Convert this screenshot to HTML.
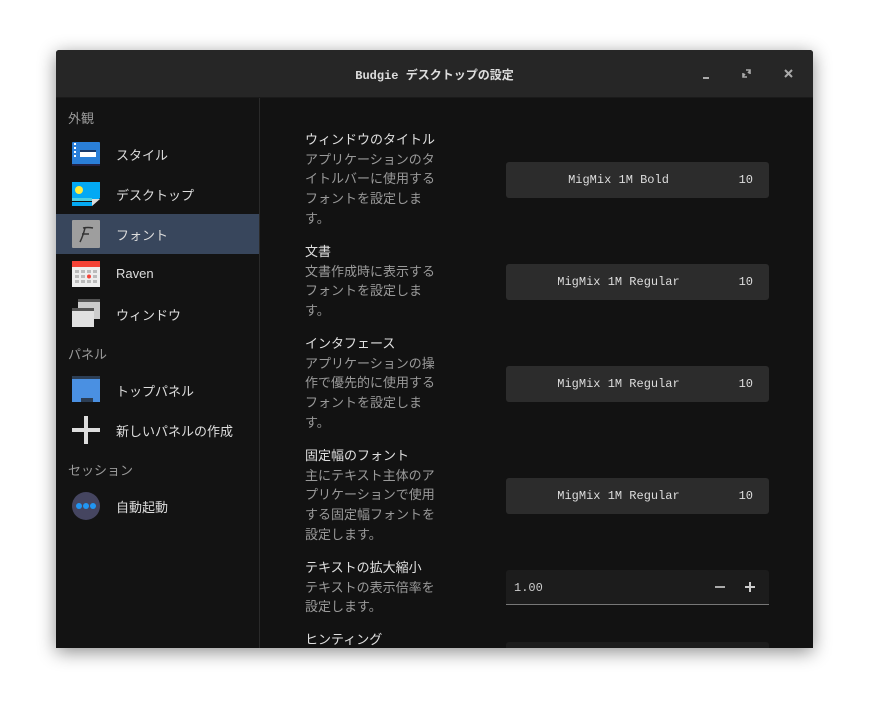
<!DOCTYPE html>
<html><head><meta charset="utf-8"><style>
body{margin:0;width:869px;height:710px;background:#fff;position:relative;overflow:hidden;font-family:"Liberation Sans","Noto Sans CJK JP",sans-serif}
.win{position:absolute;left:56px;top:50px;width:757px;height:598px;background:#121212;box-shadow:0 4px 18px rgba(0,0,0,.45);overflow:hidden;border-radius:3px 3px 0 0}
.tb{position:absolute;left:0;top:0;width:757px;height:47px;background:#262626;border-bottom:1px solid #1a1a1a}
.title{position:absolute;left:0;width:757px;top:16px;text-align:center;color:#ddd;font:bold 12px "Liberation Mono","Noto Sans CJK JP",monospace}
.side{position:absolute;left:0;top:48px;width:203px;height:550px;background:#131313;border-right:1px solid #2a2a2a}
.hd{position:absolute;left:12px;color:#9a9a9a;font-size:13px}
.it{position:absolute;left:0;width:203px;height:40px;color:#ddd;font-size:13px}
.it span{position:absolute;left:60px;top:11px}
.it.sel{background:#38465c}
.ic{position:absolute;left:16px;top:8px;width:28px;height:24px}
.lb{position:absolute;left:249px;color:#e0e0e0;font-size:13px;line-height:19.7px}
.lb i{font-style:normal;color:#9a9a9a}
.btn{position:absolute;left:450px;width:263px;height:36px;background:#2c2c2c;border-radius:3px;color:#ddd;font:12px "Liberation Mono",monospace}
.btn .n{position:absolute;left:0;width:225px;text-align:center;top:11px}
.btn .s{position:absolute;right:16px;top:11px}
</style></head><body>
<div class="win">
<div class="tb"><div class="title">Budgie デスクトップの設定</div>
<div style="position:absolute;left:647px;top:27px;width:6px;height:2px;background:#aaa"></div>
<svg style="position:absolute;left:686px;top:19px" width="10" height="10"><path d="M4 1H8V5M6 4L8 2M5 8H1V4M3 5L1 7" stroke="#aaa" stroke-width="1.6" fill="none"/></svg>
<svg style="position:absolute;left:728px;top:19px" width="10" height="10"><path d="M1 1L8 8M8 1L1 8" stroke="#aaa" stroke-width="2"/></svg>
</div>
<div class="side">
<div class="hd" style="top:10px">外観</div>
<div class="it" style="top:36px"><svg class="ic" viewBox="0 0 28 24"><rect x="0" y="0" width="28" height="24" rx="1" fill="#2a7fd8"/><rect x="0" y="22" width="28" height="2" fill="#224"/><rect x="8" y="8" width="16" height="7" fill="#fff"/><rect x="8" y="8" width="16" height="2" fill="#1a3a6a"/><rect x="2" y="1" width="2" height="2" fill="#fff"/><rect x="2" y="5" width="2" height="2" fill="#fff"/><rect x="2" y="9" width="2" height="2" fill="#fff"/><rect x="2" y="13" width="2" height="2" fill="#fff"/></svg><span>スタイル</span></div>
<div class="it" style="top:76px"><svg class="ic" viewBox="0 0 28 24"><path d="M0 0H28V16L20 24H0Z" fill="#03a9f4"/><rect x="0" y="16" width="20" height="3" fill="#4dd0e1"/><rect x="0" y="19" width="20" height="1" fill="#111"/><circle cx="7" cy="8" r="4" fill="#ffeb3b"/><path d="M20 24V17H28Z" fill="#ddd"/></svg><span>デスクトップ</span></div>
<div class="it sel" style="top:116px"><svg class="ic" viewBox="0 0 28 28" style="top:6px;height:28px"><rect width="28" height="28" rx="1" fill="#9e9e9e"/><path d="M11 8Q16 7 21 8M10 14H17M13 8Q11 16 8 22" stroke="#333" stroke-width="1.5" fill="none"/></svg><span>フォント</span></div>
<div class="it" style="top:156px"><svg class="ic" viewBox="0 0 28 26" style="height:26px;top:7px"><rect width="28" height="26" fill="#eee"/><rect width="28" height="6" fill="#f44336"/><g fill="#bbb"><rect x="3" y="9" width="4" height="3"/><rect x="9" y="9" width="4" height="3"/><rect x="15" y="9" width="4" height="3"/><rect x="21" y="9" width="4" height="3"/><rect x="3" y="14" width="4" height="3"/><rect x="9" y="14" width="4" height="3"/><rect x="21" y="14" width="4" height="3"/><rect x="3" y="19" width="4" height="3"/><rect x="9" y="19" width="4" height="3"/><rect x="15" y="19" width="4" height="3"/><rect x="21" y="19" width="4" height="3"/></g><circle cx="17" cy="15.5" r="2" fill="#f44336"/></svg><span style="top:12px">Raven</span></div>
<div class="it" style="top:196px"><svg class="ic" viewBox="0 0 28 28" style="height:28px;top:5px"><rect x="6" y="0" width="22" height="20" fill="#ccc"/><rect x="6" y="0" width="22" height="3" fill="#555"/><rect x="0" y="9" width="22" height="19" fill="#e0e0e0"/><rect x="0" y="9" width="22" height="3" fill="#555"/></svg><span>ウィンドウ</span></div>
<div class="hd" style="top:246px">パネル</div>
<div class="it" style="top:272px"><svg class="ic" viewBox="0 0 28 26" style="height:26px;top:6px"><rect width="28" height="26" fill="#4a90e2"/><rect width="28" height="3" fill="#2c3e55"/><rect x="9" y="22" width="12" height="4" fill="#2c3e55"/></svg><span>トップパネル</span></div>
<div class="it" style="top:312px"><svg class="ic" viewBox="0 0 28 28" style="height:28px;top:6px"><rect x="12" y="0" width="4" height="28" fill="#ddd"/><rect x="0" y="12" width="28" height="4" fill="#ddd"/></svg><span>新しいパネルの作成</span></div>
<div class="hd" style="top:362px">セッション</div>
<div class="it" style="top:388px"><svg class="ic" viewBox="0 0 28 28" style="height:28px;top:6px"><circle cx="14" cy="14" r="14" fill="#454560"/><circle cx="7" cy="14" r="3" fill="#2196f3"/><circle cx="14" cy="14" r="3" fill="#2196f3"/><circle cx="21" cy="14" r="3" fill="#2196f3"/></svg><span>自動起動</span></div>
</div>
<div class="lb" style="top:80px">ウィンドウのタイトル<br><i>アプリケーションのタ<br>イトルバーに使用する<br>フォントを設定しま<br>す。</i></div>
<div class="btn" style="top:112px"><span class="n">MigMix 1M Bold</span><span class="s">10</span></div>
<div class="lb" style="top:192px">文書<br><i>文書作成時に表示する<br>フォントを設定しま<br>す。</i></div>
<div class="btn" style="top:214px"><span class="n">MigMix 1M Regular</span><span class="s">10</span></div>
<div class="lb" style="top:284px">インタフェース<br><i>アプリケーションの操<br>作で優先的に使用する<br>フォントを設定しま<br>す。</i></div>
<div class="btn" style="top:316px"><span class="n">MigMix 1M Regular</span><span class="s">10</span></div>
<div class="lb" style="top:396px">固定幅のフォント<br><i>主にテキスト主体のア<br>プリケーションで使用<br>する固定幅フォントを<br>設定します。</i></div>
<div class="btn" style="top:428px"><span class="n">MigMix 1M Regular</span><span class="s">10</span></div>
<div class="lb" style="top:508px">テキストの拡大縮小<br><i>テキストの表示倍率を<br>設定します。</i></div>
<div style="position:absolute;left:450px;top:520px;width:263px;height:34px;background:#1c1c1c;border-bottom:1px solid #777;border-radius:3px 3px 0 0;color:#ccc;font:12px 'Liberation Mono',monospace"><span style="position:absolute;left:8px;top:11px">1.00</span><span style="position:absolute;left:209px;top:16px;width:10px;height:2px;background:#aaa"></span><span style="position:absolute;left:239px;top:16px;width:10px;height:2px;background:#ccc"></span><span style="position:absolute;left:243px;top:12px;width:2px;height:10px;background:#ccc"></span></div>
<div class="lb" style="top:580px">ヒンティング</div>
<div style="position:absolute;left:450px;top:592px;width:263px;height:30px;background:#1c1c1c;border-radius:3px"></div>
</div>
</body></html>
